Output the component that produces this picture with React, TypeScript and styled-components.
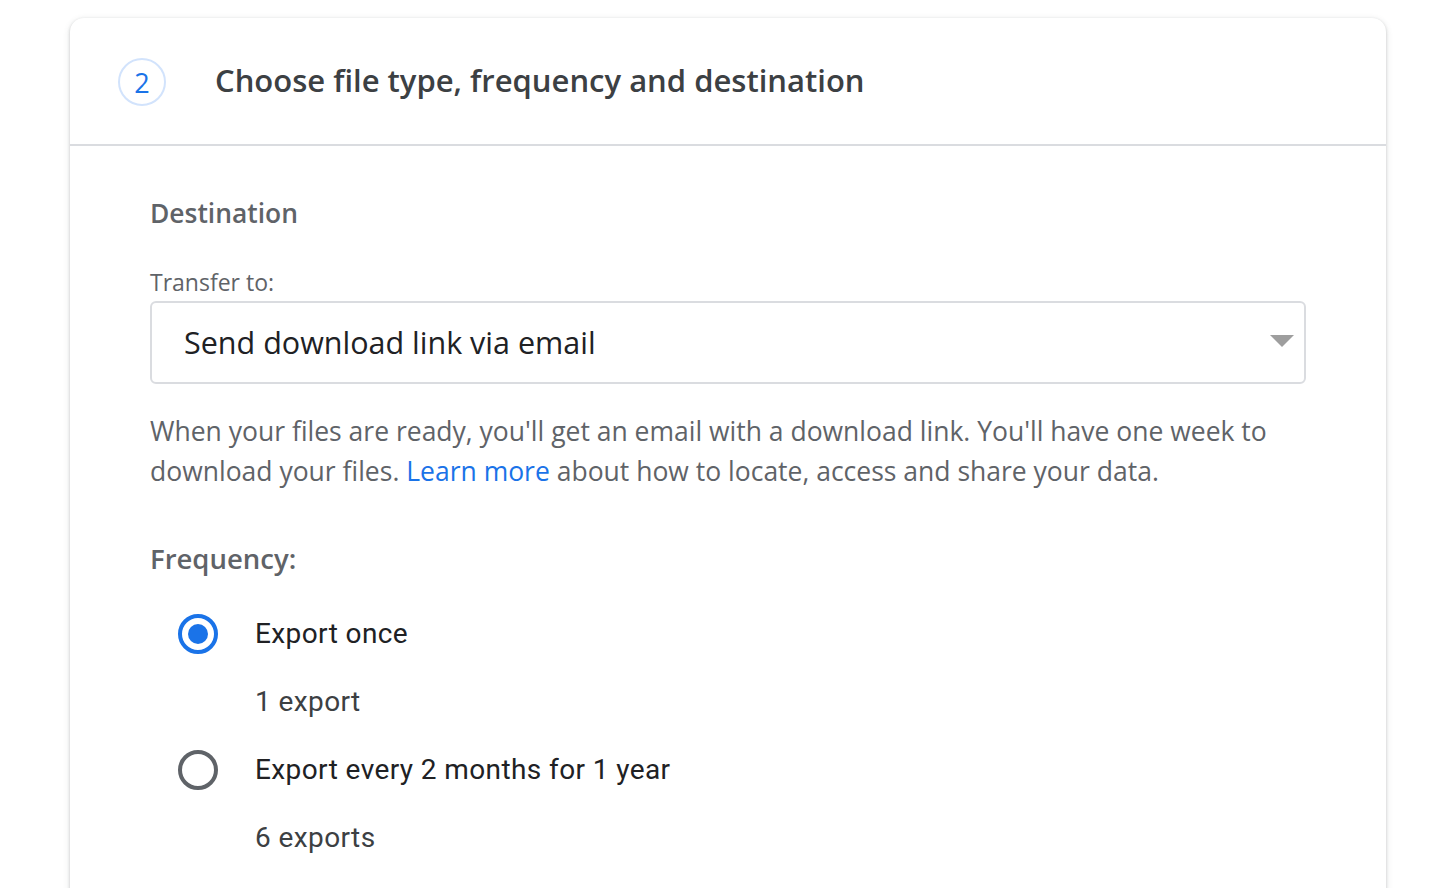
import React from "react";
import styled, { createGlobalStyle } from "styled-components";

const Global = createGlobalStyle`
  html, body { margin: 0; padding: 0; background: #ffffff; }
  body { font-family: "Open Sans", "Liberation Sans", sans-serif; }
`;

const Page = styled.div`
  padding: 18px 66px 0 70px;
  height: 888px;
  box-sizing: border-box;
  overflow: hidden;
`;

const Card = styled.section`
  background: #fff;
  border-radius: 14px 14px 0 0;
  box-shadow: 0 1px 3px rgba(60, 64, 67, 0.25), 0 2px 6px 1px rgba(60, 64, 67, 0.1);
  min-height: 900px;
`;

const Header = styled.header`
  display: flex;
  align-items: center;
  height: 126px;
  padding-left: 48px;
  border-bottom: 2px solid #dadce0;
`;

const StepBadge = styled.div`
  width: 44px;
  height: 44px;
  border: 2px solid #d2e3fc;
  border-radius: 50%;
  display: flex;
  align-items: center;
  justify-content: center;
  color: #1a73e8;
  font-family: "Open Sans", sans-serif;
  font-size: 27px;
  margin-right: 49px;
  margin-top: 2px;
`;

const Title = styled.h2`
  margin: -3px 0 0 0;
  font-family: "Open Sans", sans-serif;
  font-weight: 600;
  font-size: 31px;
  color: #3c4043;
  letter-spacing: 0;
`;

const Body = styled.div`
  padding: 49px 80px 0 80px;
`;

const SectionTitle = styled.h3`
  margin: 0;
  font-weight: 600;
  font-size: 26.4px;
  line-height: 36px;
  color: #5f6368;
`;

const FieldLabel = styled.label`
  display: block;
  margin-top: 36px;
  font-size: 23px;
  line-height: 30px;
  color: #5f6368;
`;

const Select = styled.div`
  margin-top: 4px;
  height: 79px;
  border: 2px solid #dadce0;
  border-radius: 6px;
  display: flex;
  align-items: center;
  justify-content: space-between;
  padding: 0 10px 0 32px;
`;

const SelectValue = styled.span`
  font-size: 30.5px;
  color: #202124;
  margin-top: -2px;
`;

const Arrow = styled.span`
  width: 0;
  height: 0;
  border-left: 12px solid transparent;
  border-right: 12px solid transparent;
  border-top: 12px solid #9e9e9e;
  margin-top: -4px;
`;

const Description = styled.p`
  margin: 27px 0 0 0;
  font-size: 26.5px;
  line-height: 40px;
  color: #5f6368;
`;

const Link = styled.a`
  color: #1a73e8;
  text-decoration: none;
`;

const FreqTitle = styled.h3`
  margin: 50px 0 0 0;
  font-weight: 600;
  font-size: 27.5px;
  line-height: 36px;
  color: #5f6368;
`;

const RadioList = styled.div`
  margin-top: 37px;
  padding-left: 28px;
  display: flex;
  flex-direction: column;
`;

const Option = styled.div`
  display: grid;
  grid-template-columns: 40px 1fr;
  column-gap: 37px;
  align-items: center;
`;

const RadioCircle = styled.span<{ $checked?: boolean }>`
  width: 40px;
  height: 40px;
  box-sizing: border-box;
  border-radius: 50%;
  border: 4px solid ${(p) => (p.$checked ? "#1a73e8" : "#5f6368")};
  display: flex;
  align-items: center;
  justify-content: center;
  &::after {
    content: "";
    width: 20px;
    height: 20px;
    border-radius: 50%;
    background: ${(p) => (p.$checked ? "#1a73e8" : "transparent")};
  }
`;

const OptionLabel = styled.span`
  font-family: Roboto, "Liberation Sans", sans-serif;
  font-size: 28px;
  line-height: 40px;
  color: #202124;
  letter-spacing: 0.4px;
`;

const OptionSub = styled.span`
  grid-column: 2;
  font-family: Roboto, "Liberation Sans", sans-serif;
  font-size: 28px;
  line-height: 40px;
  color: #3c4043;
  letter-spacing: 0.4px;
  margin: 28px 0 28px 0;
`;

export default function App() {
  return (
    <>
      <Global />
      <Page>
        <Card>
          <Header>
            <StepBadge>2</StepBadge>
            <Title>Choose file type, frequency and destination</Title>
          </Header>
          <Body>
            <SectionTitle>Destination</SectionTitle>
            <FieldLabel>Transfer to:</FieldLabel>
            <Select>
              <SelectValue>Send download link via email</SelectValue>
              <Arrow />
            </Select>
            <Description>
              When your files are ready, you'll get an email with a download link. You'll have one week to
              download your files. <Link href="#">Learn more</Link> about how to locate, access and share your data.
            </Description>
            <FreqTitle>Frequency:</FreqTitle>
            <RadioList>
              <Option>
                <RadioCircle $checked />
                <OptionLabel>Export once</OptionLabel>
                <OptionSub>1 export</OptionSub>
              </Option>
              <Option>
                <RadioCircle />
                <OptionLabel>Export every 2 months for 1 year</OptionLabel>
                <OptionSub>6 exports</OptionSub>
              </Option>
            </RadioList>
          </Body>
        </Card>
      </Page>
    </>
  );
}
